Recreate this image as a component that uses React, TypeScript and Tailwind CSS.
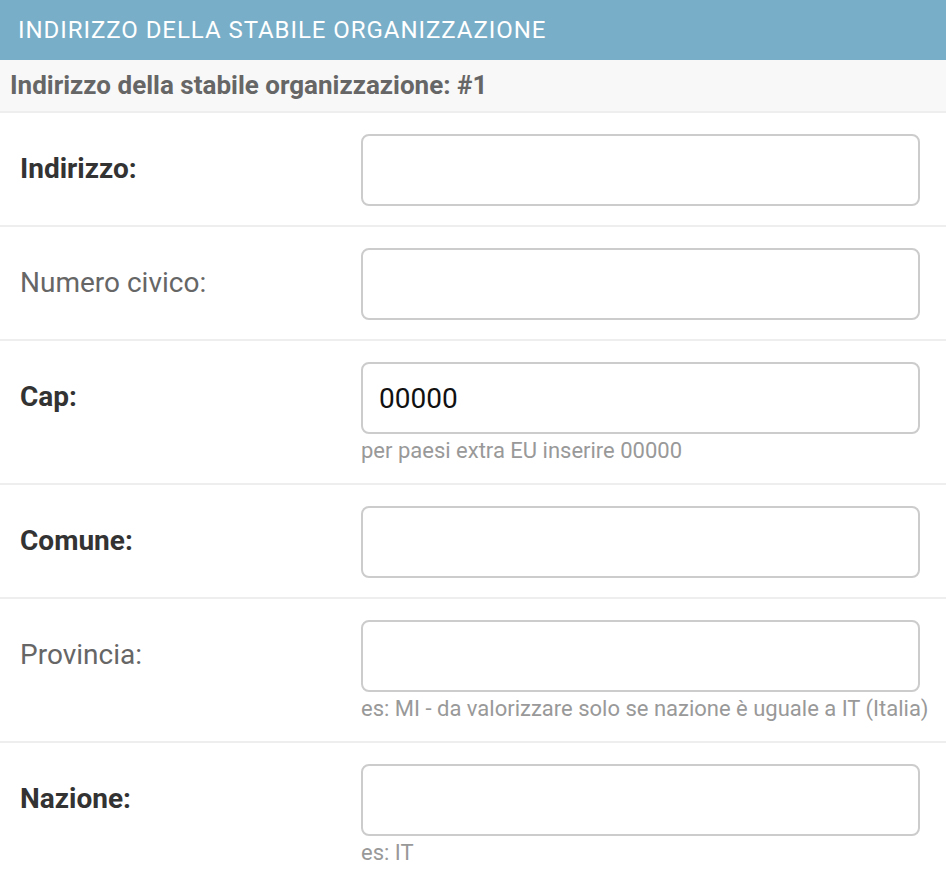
import React from "react";

type Field = {
  label: string;
  required: boolean;
  value?: string;
  help?: string;
};

const fields: Field[] = [
  { label: "Indirizzo:", required: true },
  { label: "Numero civico:", required: false },
  { label: "Cap:", required: true, value: "00000", help: "per paesi extra EU inserire 00000" },
  { label: "Comune:", required: true },
  { label: "Provincia:", required: false, help: "es: MI - da valorizzare solo se nazione è uguale a IT (Italia)" },
  { label: "Nazione:", required: true, help: "es: IT" },
];

const FormRow: React.FC<{ field: Field }> = ({ field }) => (
  <div className="flex border-b-2 border-[#eee] pl-5 pt-[21px] pb-[19px]">
    <label
      className={`w-[341px] shrink-0 pt-[19px] text-[28px] leading-[32px] ${
        field.required ? "font-bold text-[#333]" : "text-[#666]"
      }`}
    >
      {field.label}
    </label>
    <div className="flex flex-col">
      <input
        type="text"
        defaultValue={field.value}
        className="h-[72px] w-[559px] rounded-[8px] border-2 border-[#ccc] bg-white px-[16px] text-[28px] text-[#111] outline-none"
      />
      {field.help && (
        <div className="pt-[4px] text-[22px] leading-[26px] text-[#999]">{field.help}</div>
      )}
    </div>
  </div>
);

export default function App() {
  return (
    <div className="min-h-screen bg-white font-['Roboto',sans-serif]">
      {/* Module header */}
      <h2 className="flex h-[60px] items-center bg-[#79aec8] px-[18px] text-[24px] tracking-[0.95px] text-white">
        INDIRIZZO DELLA STABILE ORGANIZZAZIONE
      </h2>

      {/* Inline heading */}
      <h3 className="flex h-[53px] items-center border-b-2 border-[#eee] bg-[#f8f8f8] px-[10px] text-[26px] font-bold text-[#666]">
        Indirizzo della stabile organizzazione: #1
      </h3>

      {fields.map((f) => (
        <FormRow key={f.label} field={f} />
      ))}
    </div>
  );
}
